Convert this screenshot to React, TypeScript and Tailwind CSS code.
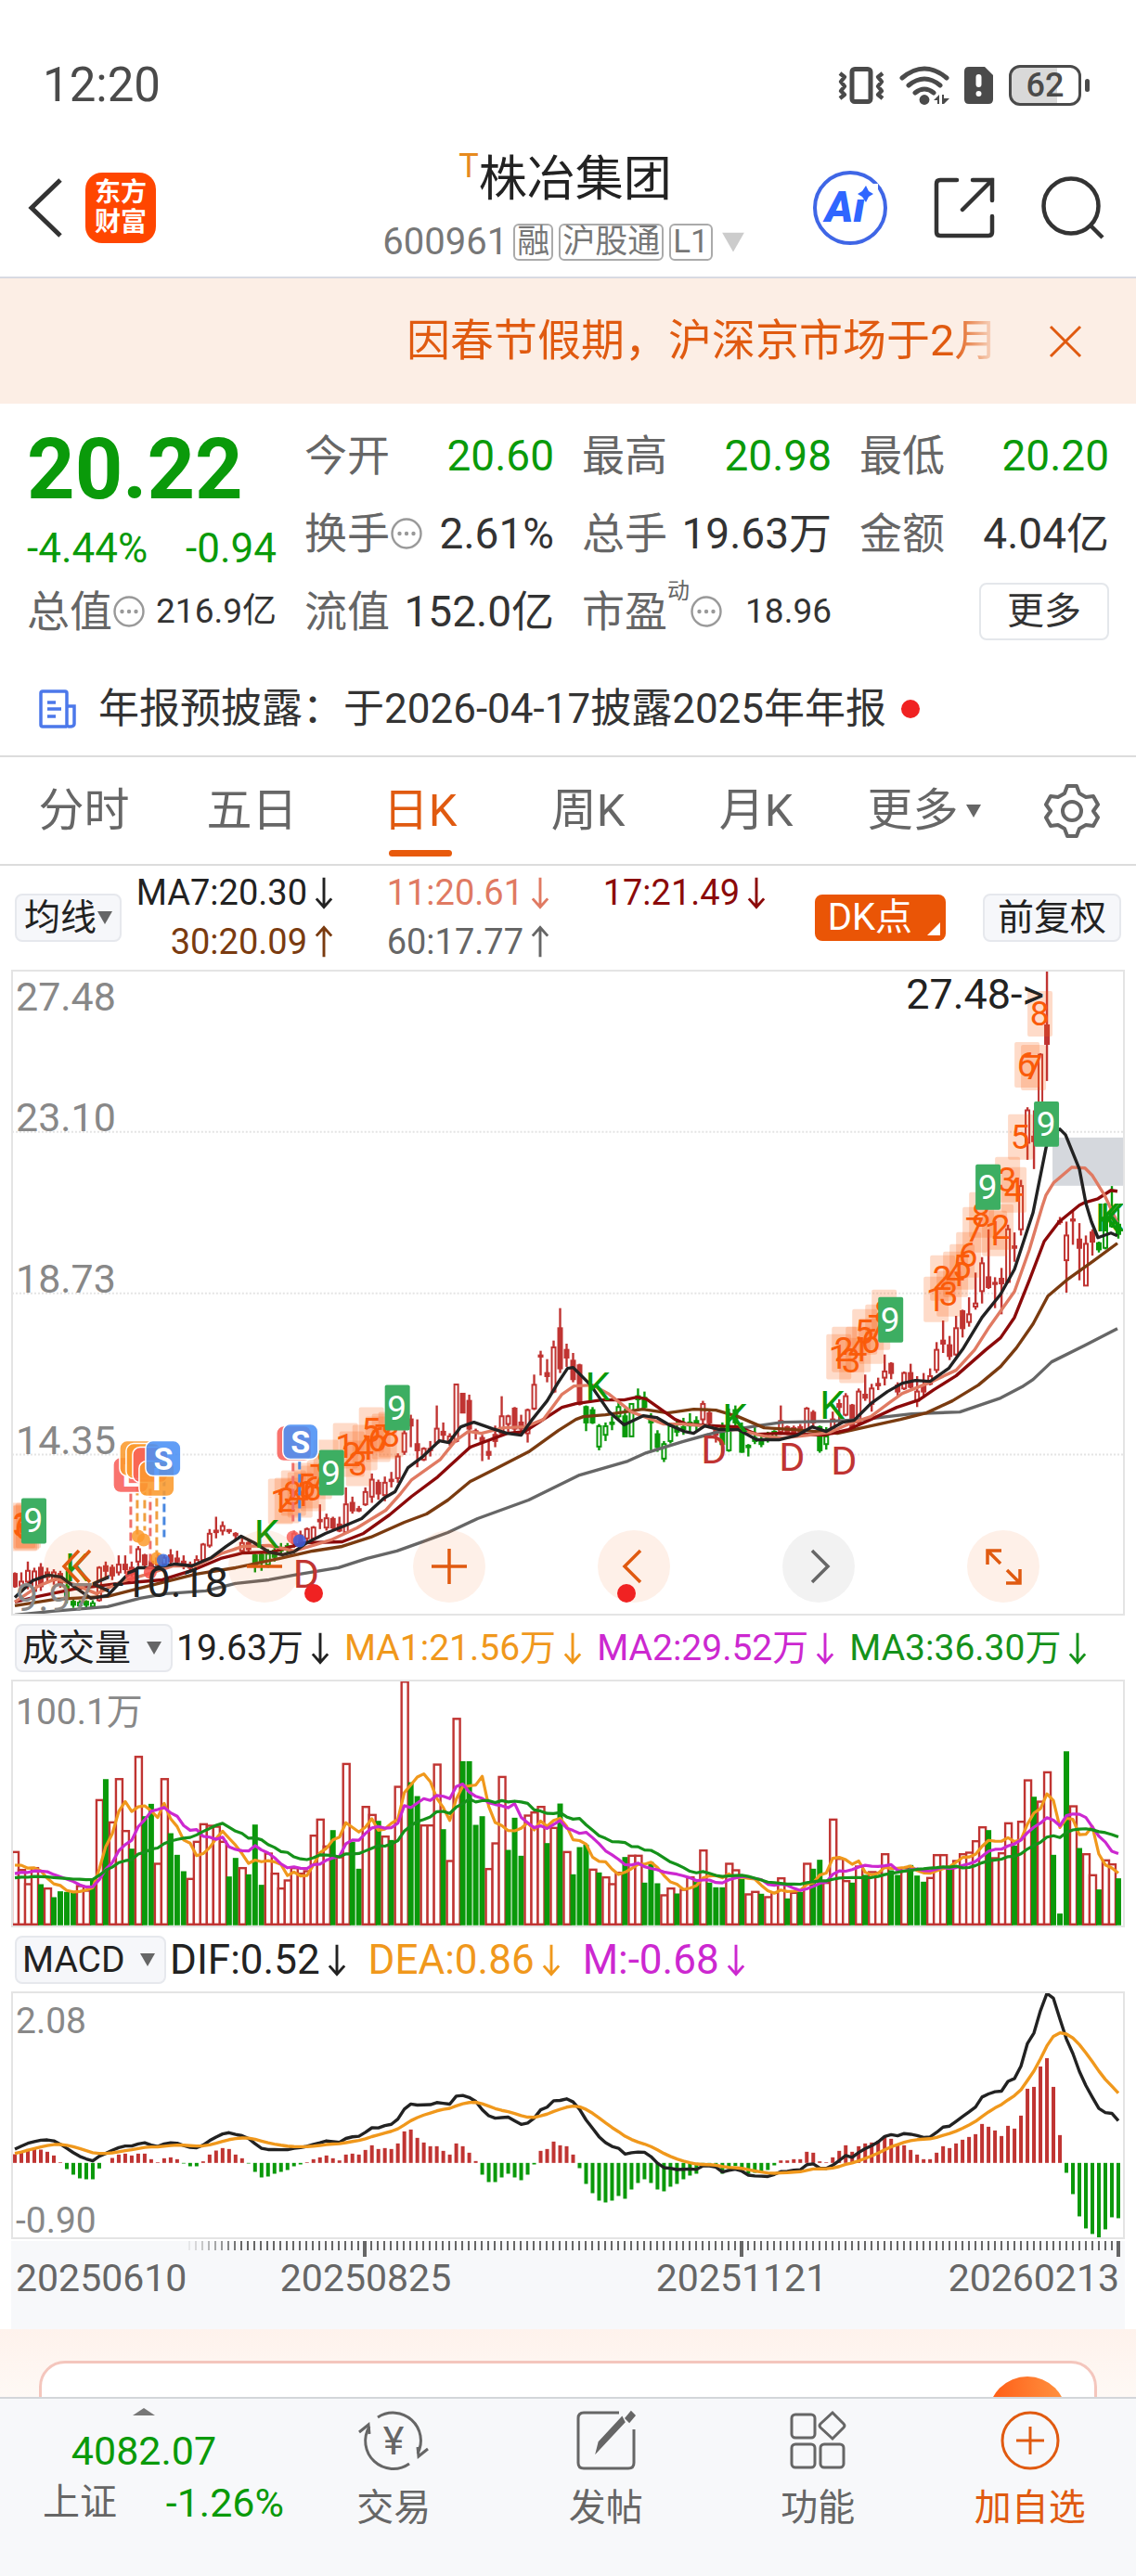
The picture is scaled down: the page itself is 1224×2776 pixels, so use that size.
import { FC, ReactNode } from "react";

type Candle = [kind: string, high: number, top: number, bottom: number, low: number];
type Point = [x: number, y: number];

const STEP = 7;
const FIRST_X = 15;
const barX = (i: number) => FIRST_X + i * STEP;

const RED = "#c03432";
const GREEN = "#0a990a";

// r / g are hollow bodies, R / G are filled ones. Levels are thirds of a unit below 1300.
const candles: Candle[] = [
  ["R", 1185, 1190, 1230, 1235], ["r", 1185, 1215, 1228, 1232], ["r", 1150, 1180, 1215, 1240], ["r", 1170, 1182, 1245, 1250],
  ["R", 1155, 1170, 1230, 1245], ["R", 1170, 1185, 1200, 1215], ["r", 1175, 1185, 1210, 1225], ["R", 1180, 1190, 1225, 1235],
  ["G", 1180, 1230, 1270, 1285], ["G", 1270, 1280, 1290, 1300], ["g", 1275, 1283, 1292, 1302], ["G", 1275, 1280, 1290, 1300],
  ["g", 1275, 1285, 1295, 1303], ["r", 1165, 1170, 1275, 1280], ["R", 1150, 1165, 1180, 1200], ["R", 1160, 1170, 1195, 1210],
  ["r", 1130, 1160, 1185, 1195], ["R", 1130, 1160, 1175, 1190], ["R", 1150, 1170, 1190, 1200], ["r", 1100, 1110, 1150, 1165],
  ["R", 1125, 1130, 1160, 1175], ["R", 1130, 1150, 1165, 1175], ["r", 1125, 1140, 1160, 1165], ["r", 1130, 1138, 1158, 1165],
  ["R", 1110, 1130, 1150, 1160], ["R", 1115, 1140, 1150, 1165], ["R", 1130, 1150, 1165, 1175], ["R", 1150, 1160, 1170, 1180],
  ["r", 1130, 1145, 1165, 1170], ["r", 1090, 1095, 1145, 1150], ["r", 1045, 1060, 1098, 1105], ["R", 1005, 1050, 1055, 1075],
  ["r", 1020, 1035, 1050, 1065], ["R", 1045, 1048, 1052, 1060], ["R", 1055, 1060, 1065, 1080], ["r", 1070, 1090, 1115, 1125],
  ["R", 1080, 1090, 1110, 1125], ["G", 1125, 1130, 1160, 1185], ["G", 1120, 1128, 1150, 1180], ["g", 1110, 1125, 1160, 1170],
  ["G", 1095, 1115, 1135, 1150], ["G", 1090, 1105, 1115, 1125], ["G", 1090, 1100, 1110, 1125], ["r", 1050, 1060, 1090, 1105],
  ["R", 1050, 1065, 1090, 1100], ["r", 1040, 1045, 1075, 1085], ["r", 1035, 1040, 1075, 1080], ["R", 965, 1015, 1020, 1045],
  ["r", 995, 1010, 1040, 1050], ["R", 1005, 1012, 1040, 1050], ["R", 1005, 1030, 1050, 1055], ["r", 910, 965, 1055, 1060],
  ["R", 940, 960, 985, 995], ["R", 970, 980, 985, 990], ["r", 910, 925, 965, 970], ["r", 865, 885, 940, 960],
  ["R", 885, 895, 930, 950], ["r", 875, 895, 935, 955], ["R", 860, 885, 890, 910], ["r", 800, 810, 880, 895],
  ["r", 725, 735, 795, 805], ["R", 675, 690, 710, 780], ["R", 690, 770, 790, 845], ["r", 780, 785, 820, 825],
  ["R", 760, 785, 790, 810], ["r", 645, 720, 765, 770], ["R", 700, 730, 740, 765], ["r", 735, 745, 765, 775],
  ["r", 575, 577, 760, 765], ["R", 605, 607, 668, 670], ["R", 610, 630, 720, 785], ["R", 720, 728, 732, 755],
  ["R", 740, 750, 760, 825], ["R", 760, 795, 805, 820], ["R", 710, 740, 760, 780], ["r", 615, 680, 735, 740],
  ["r", 675, 680, 705, 735], ["R", 650, 655, 720, 740], ["R", 675, 700, 720, 740], ["r", 655, 660, 735, 765],
  ["r", 545, 578, 655, 660], ["R", 468, 483, 487, 548], ["R", 495, 540, 550, 570], ["r", 435, 457, 600, 605],
  ["R", 330, 395, 525, 540], ["R", 445, 465, 490, 520], ["R", 475, 500, 560, 570], ["R", 510, 515, 640, 645],
  ["G", 645, 650, 700, 728], ["G", 650, 660, 700, 705], ["g", 705, 712, 778, 790], ["g", 700, 712, 740, 760],
  ["G", 680, 700, 705, 725], ["g", 630, 650, 680, 690], ["G", 655, 680, 745, 748], ["g", 640, 640, 745, 745],
  ["G", 590, 615, 625, 655], ["G", 600, 620, 650, 660], ["G", 670, 690, 700, 790], ["G", 725, 738, 780, 795],
  ["g", 760, 770, 817, 828], ["g", 700, 712, 760, 768], ["G", 690, 720, 730, 745], ["G", 685, 715, 722, 740],
  ["g", 670, 700, 710, 735], ["G", 680, 695, 710, 730], ["r", 630, 640, 690, 710], ["R", 655, 670, 700, 715],
  ["R", 710, 720, 740, 765], ["G", 700, 715, 770, 808], ["g", 655, 720, 790, 795], ["G", 645, 660, 700, 720],
  ["G", 700, 715, 795, 798], ["G", 770, 775, 780, 810], ["G", 715, 750, 760, 770], ["G", 740, 755, 770, 780],
  ["G", 730, 745, 755, 765], ["g", 725, 730, 748, 752], ["r", 645, 695, 730, 740], ["R", 710, 715, 735, 740],
  ["R", 710, 718, 735, 740], ["R", 705, 715, 735, 740], ["r", 650, 655, 725, 730], ["R", 660, 668, 700, 720],
  ["G", 710, 715, 790, 798], ["g", 715, 745, 770, 788], ["r", 665, 690, 730, 740], ["R", 625, 640, 650, 710],
  ["r", 605, 615, 675, 680], ["R", 640, 645, 715, 720], ["r", 590, 600, 700, 710], ["R", 545, 610, 620, 630],
  ["r", 575, 590, 640, 665], ["R", 555, 575, 580, 595], ["r", 480, 535, 555, 580], ["R", 505, 510, 540, 560],
  ["R", 570, 580, 600, 615], ["r", 535, 540, 590, 595], ["R", 510, 540, 585, 590], ["r", 550, 600, 630, 650],
  ["R", 540, 580, 600, 620], ["r", 525, 550, 575, 580], ["r", 440, 465, 530, 540], ["R", 370, 435, 445, 475],
  ["R", 420, 450, 485, 498], ["r", 355, 395, 480, 485], ["R", 335, 340, 395, 425], ["r", 295, 350, 375, 390],
  ["r", 215, 315, 325, 335], ["r", 165, 185, 275, 315], ["R", 75, 230, 262, 268], ["R", 230, 248, 252, 330],
  ["R", 200, 235, 250, 350], ["r", 60, 75, 245, 250], ["R", 85, 130, 135, 180], ["r", -85, -65, 75, 95],
  ["r", -320, -310, -205, -150], ["R", -310, -225, -210, -120], ["r", -495, -490, -330, -320], ["R", -763, -585, -525, -405],
  ["R", -330, -320, -230, -210], ["R", 35, 48, 52, 60], ["r", 50, 95, 175, 280], ["R", 15, 43, 47, 125],
  ["R", 55, 108, 135, 240], ["r", 95, 122, 257, 258], ["R", 75, 85, 115, 160], ["G", 115, 120, 140, 150],
  ["g", -10, 50, 135, 140], ["g", -65, 20, 65, 70], ["G", 10, 60, 90, 105],
];

const ma7: Point[] = [
  [15, 1722], [34, 1704], [51, 1698], [65, 1700], [81, 1712], [97, 1723], [115, 1720], [134, 1700], [148, 1690], [166, 1690],
  [188, 1686], [206, 1688], [227, 1679], [243, 1667], [259, 1656], [273, 1663], [289, 1673], [304, 1676], [316, 1673],
  [330, 1663], [350, 1653], [370, 1645], [389, 1637], [413, 1615], [425, 1608], [439, 1582], [455, 1570], [473, 1553],
  [483, 1555], [496, 1538], [510, 1533], [530, 1540], [546, 1545], [561, 1547], [573, 1530], [589, 1510], [601, 1490],
  [611, 1475], [617, 1474], [636, 1493], [656, 1522], [672, 1536], [693, 1526], [707, 1528], [719, 1535], [737, 1543],
  [747, 1545], [759, 1537], [775, 1541], [795, 1541], [815, 1552], [839, 1552], [859, 1547], [875, 1538], [890, 1543],
  [908, 1533], [920, 1531], [938, 1513], [956, 1500], [972, 1491], [986, 1488], [1002, 1489], [1022, 1475], [1038, 1453],
  [1058, 1420], [1078, 1395], [1093, 1368], [1113, 1307], [1127, 1237], [1132, 1222], [1142, 1217], [1148, 1223],
  [1163, 1260], [1170, 1297], [1176, 1317], [1183, 1334], [1197, 1329], [1204, 1332],
];
const ma11: Point[] = [
  [15, 1727], [40, 1710], [59, 1702], [79, 1708], [103, 1718], [130, 1705], [158, 1697], [186, 1688], [210, 1688],
  [237, 1675], [261, 1667], [289, 1666], [316, 1672], [340, 1665], [356, 1660], [384, 1647], [415, 1628], [431, 1610],
  [443, 1595], [474, 1573], [490, 1553], [504, 1543], [518, 1545], [542, 1539], [565, 1538], [585, 1530], [605, 1503],
  [618, 1494], [638, 1493], [656, 1503], [680, 1522], [715, 1535], [735, 1535], [759, 1537], [775, 1541], [795, 1541],
  [823, 1548], [843, 1550], [871, 1547], [894, 1544], [914, 1535], [938, 1527], [958, 1512], [972, 1502], [1002, 1490],
  [1030, 1477], [1050, 1455], [1066, 1430], [1093, 1392], [1109, 1347], [1123, 1300], [1127, 1288], [1135, 1275],
  [1155, 1258], [1169, 1259], [1177, 1267], [1190, 1288], [1204, 1318],
];
const ma17: Point[] = [
  [15, 1727], [40, 1721], [79, 1713], [127, 1707], [174, 1703], [206, 1693], [237, 1680], [261, 1674], [293, 1673],
  [328, 1663], [368, 1662], [391, 1653], [419, 1633], [443, 1613], [471, 1592], [506, 1560], [546, 1545], [565, 1543],
  [585, 1530], [605, 1517], [620, 1513], [648, 1509], [672, 1509], [686, 1506], [696, 1508], [727, 1530], [739, 1535],
  [771, 1537], [795, 1538], [815, 1546], [839, 1545], [887, 1547], [914, 1541], [938, 1530], [966, 1517], [990, 1509],
  [1006, 1498], [1030, 1483], [1062, 1455], [1078, 1442], [1093, 1420], [1109, 1380], [1125, 1338], [1141, 1317],
  [1163, 1299], [1169, 1296], [1183, 1292], [1197, 1283], [1204, 1284],
];
const ma30: Point[] = [
  [15, 1731], [59, 1724], [115, 1721], [158, 1710], [210, 1697], [253, 1690], [301, 1680], [336, 1672], [368, 1667],
  [399, 1657], [435, 1641], [459, 1632], [482, 1617], [506, 1597], [534, 1583], [569, 1565], [601, 1542], [620, 1530],
  [628, 1527], [652, 1525], [692, 1519], [719, 1523], [747, 1519], [771, 1520], [795, 1527], [823, 1539], [855, 1541],
  [902, 1545], [938, 1537], [970, 1530], [998, 1523], [1026, 1510], [1054, 1493], [1078, 1473], [1095, 1453],
  [1113, 1427], [1129, 1397], [1149, 1380], [1177, 1360], [1204, 1340],
];
const ma60: Point[] = [
  [15, 1741], [55, 1737], [115, 1732], [150, 1723], [178, 1718], [221, 1715], [253, 1707], [289, 1703], [316, 1698],
  [364, 1690], [395, 1680], [427, 1672], [455, 1662], [482, 1652], [514, 1637], [569, 1617], [624, 1590], [676, 1575],
  [696, 1566], [735, 1554], [771, 1544], [815, 1537], [843, 1533], [894, 1532], [930, 1530], [982, 1524], [1034, 1522],
  [1078, 1507], [1101, 1495], [1113, 1487], [1133, 1468], [1169, 1450], [1204, 1432],
];

const counts: [string, number, number][] = [
  ["3", 10, 1620], ["6", 12, 1623], ["7", 14, 1622], ["8", 16, 1620],
  ["1", 288, 1594], ["2", 295, 1593], ["3", 302, 1585], ["4", 309, 1587], ["5", 316, 1577], ["6", 323, 1580], ["7", 330, 1567], ["8", 337, 1552],
  ["1", 358, 1534], ["2", 365, 1543], ["3", 372, 1553], ["4", 379, 1536], ["5", 386, 1517], ["6", 393, 1527], ["7", 400, 1524], ["8", 407, 1522],
  ["1", 890, 1438], ["2", 896, 1430], ["3", 904, 1442], ["4", 911, 1430], ["5", 918, 1411], ["6", 925, 1421], ["7", 932, 1406], ["8", 939, 1390],
  ["1", 995, 1376], ["2", 1002, 1353], ["3", 1009, 1370], ["4", 1016, 1349], ["5", 1023, 1341], ["6", 1030, 1328], ["7", 1037, 1301], ["8", 1044, 1285],
  ["1", 1058, 1305], ["2", 1065, 1298], ["3", 1072, 1247], ["4", 1079, 1258], ["5", 1086, 1201], ["6", 1093, 1123], ["7", 1100, 1126], ["8", 1107, 1068],
];
const nines: Point[] = [[22, 1615], [343, 1563], [414, 1493], [946, 1398], [1051, 1255], [1114, 1187]];
const kMarks: Point[] = [[69, 1705], [273, 1669], [630, 1509], [778, 1543], [883, 1529], [1180, 1327], [1185, 1327]];
const dMarks: Point[] = [[315, 1712], [755, 1577], [839, 1585], [895, 1589]];

const badges: [string, number, number, string][] = [
  ["L", 121, 1571, "#f8605a"], ["", 128, 1553, "#fb9a2c"], ["", 135, 1556, "#fb9a2c"], ["", 142, 1560, "#f8605a"],
  ["I", 149, 1575, "#fb9a2c"], ["S", 156, 1553, "#4a90f5"], ["", 297, 1537, "#f8605a"], ["S", 304, 1535, "#4a90f5"],
];
const drops: [number, number, number, string][] = [
  [140, 1610, 1675, "#f0706a"], [147, 1603, 1655, "#f0a040"], [155, 1603, 1650, "#f0a040"], [161, 1605, 1690, "#f0706a"],
  [168, 1615, 1675, "#f0a040"], [176, 1593, 1657, "#4a88e0"], [315, 1577, 1640, "#f0706a"], [322, 1575, 1640, "#4a88e0"],
];
const dots: [number, number, string][] = [
  [148, 1656, "#fb9a2c"], [154, 1660, "#fb9a2c"], [168, 1680, "#fb9a2c"], [175, 1682, "#3b6fe0"], [141, 1698, "#f8504a"],
  [161, 1695, "#f8504a"], [315, 1657, "#f8605a"], [322, 1661, "#3b5fe0"],
];

// Tops of the volume bars in thirds of a unit, negative on falling days.
const volume = [
  768, 826, 872, 820, -875, 886, -917, -898, -900, -900, 878, 893, -860, 600, -535, 672, 532, 700, -760, 460,
  -655, -615, 806, 532, -710, -780, -833, 855, 735, 678, 683, 686, 735, -850, -790, 820, -843, -682, -877, 773,
  838, 886, 860, 820, 838, 830, 715, 663, 750, -700, 785, 483, -738, -825, 622, 648, -670, 718, -732, 557,
  217, -545, -590, 682, 682, 485, -697, 797, 337, -477, -477, -683, -655, 823, 740, 525, -764, -660, -783, 650,
  640, 622, -742, 690, -614, 768, -843, -755, -747, 825, -837, 850, 872, 835, -787, 780, 780, -870, -803, -872,
  908, 886, -905, 890, 850, -868, 763, -870, -885, -885, 806, 827, -858, 905, 897, -906, 914, 900, 853, -921,
  900, -900, 806, -825, -796, 868, 663, 790, 862, -870, 815, -845, 833, 835, 775, -830, -845, 820, -813, -847,
  -867, 852, 778, 778, -815, 797, 775, 770, 733, 688, -700, 788, 772, 675, -750, 670, 536, -592, 605, 510,
  -780, -970, -445, 620, -758, 775, 843, -892, 795, 808, -856,
];
const macd = [
  28, 38, 45, 45, 43, 36, 24, 2, -20, -38, -50, -53, -53, -18, 0, 16, 27, 30, 24, 30, 30, 12, 2, 15, 18, 12, -2, -11, -11, 5,
  27, 40, 48, 45, 27, 15, -2, -29, -47, -44, -35, -29, -23, -11, -5, 2, 12, 18, 24, 15, 8, 27, 30, 27, 42, 57, 45, 48, 45, 63,
  102, 108, 81, 66, 54, 54, 39, 27, 63, 54, 33, 6, -38, -62, -62, -47, -35, -47, -56, -38, -5, 39, 45, 69, 57, 54, 27, -17, -68, -98,
  -122, -128, -122, -107, -116, -86, -65, -53, -65, -86, -92, -77, -68, -53, -41, -35, -10, -8, -12, -35, -20, -10, -18, -35, -32, -27, -23, -8, 8, 8,
  12, 12, 36, 33, 5, 2, 18, 39, 57, 36, 54, 63, 66, 72, 86, 78, 57, 57, 42, 27, 12, 12, 33, 54, 48, 63, 75, 84, 93, 126,
  117, 105, 87, 120, 111, 153, 240, 246, 312, 339, 246, 90, -32, -101, -173, -212, -230, -242, -215, -176, -179,
];

const toLine = (points: Point[]) => points.map((p) => p.join(",")).join(" ");

function average(n: number) {
  const tops = [...Array(16).fill(868), 825, 825, 825, 825, ...volume.map(Math.abs)];
  return toLine(
    volume.map((_, i) => {
      const part = tops.slice(i + 21 - n, i + 21);
      return [barX(i), part.reduce((a, b) => a + b, 0) / n / 3 - 72] as Point;
    })
  );
}

let sum = 27;
const dea = macd.map((m) => (sum += m / 8));
const dif = dea.map((d, i) => d + macd[i] / 2);
const macdLine = (values: number[]) => toLine(values.map((v, i) => [barX(i), 184 - v / 3] as Point));

const Caret: FC<{ className?: string }> = ({ className = "" }) => (
  <svg viewBox="0 0 16 14" className={"h-3.5 w-4 shrink-0 " + className} fill="currentColor"><path d="M0 0h16L8 14z" /></svg>
);

const Arrow: FC<{ up?: boolean }> = ({ up }) => (
  <svg viewBox="0 0 22 38" className={"ml-2 inline-block h-9 w-5 shrink-0 align-[-5px] " + (up ? "rotate-180" : "")} fill="none" stroke="currentColor" strokeWidth="3.2">
    <path d="M11 1v35M2 26l9 10 9-10" />
  </svg>
);

const More: FC = () => (
  <svg viewBox="0 0 36 36" className="h-9 w-9 shrink-0" fill="none" stroke="#999" strokeWidth="2.4">
    <circle cx="18" cy="18" r="15.5" />
    <g fill="#999" stroke="none"><circle cx="10.5" cy="18" r="2.2" /><circle cx="18" cy="18" r="2.2" /><circle cx="25.5" cy="18" r="2.2" /></g>
  </svg>
);

const Field: FC<{ label: ReactNode; value: string; green?: boolean; small?: boolean }> = ({ label, value, green, small }) => (
  <div className="flex h-[84px] items-center justify-between whitespace-nowrap">
    <span className="flex items-center text-[46px] text-[#666]">{label}</span>
    <span className={(small ? "text-[37px] " : "text-[46px] ") + (green ? "text-[#0a9a0a]" : "text-[#333]")}>{value}</span>
  </div>
);

const Picker: FC<{ name: string; value: string; tight?: boolean }> = ({ name, value, tight }) => (
  <div className={"flex h-[52px] shrink-0 items-center rounded-lg border-2 border-[#e6e8ed] bg-[#f6f7fa] " + (tight ? "px-2" : "pl-1.5 pr-2.5")}>
    <select aria-label={name} className="appearance-none bg-transparent text-[39px] leading-[48px] text-[#222]">
      <option>{value}</option>
    </select>
    <Caret className={tight ? "text-[#666]" : "ml-4 text-[#666]"} />
  </div>
);

const RoundButton: FC<{ label: string; grey?: boolean; dot?: string; children: ReactNode }> = ({ label, grey, dot, children }) => (
  <button aria-label={label} className={"relative h-[78px] w-[78px] rounded-full " + (grey ? "bg-black/5" : "bg-[#f26a1b]/10")}>
    <svg viewBox="0 0 78 78" className="h-full w-full" fill="none" stroke={grey ? "#666" : "#e05a10"} strokeWidth="3.5">{children}</svg>
    {dot && <span className={"absolute bottom-0 h-5 w-5 rounded-full bg-[#f02222] " + dot} />}
  </button>
);

const NavItem: FC<{ label: string; active?: boolean; children: ReactNode }> = ({ label, active, children }) => (
  <a href="#" className={"flex flex-1 flex-col items-center pt-3 " + (active ? "text-[#e05a10]" : "text-[#666]")}>
    <svg viewBox="0 0 80 66" className="h-[66px] w-20" fill="none" stroke="currentColor" strokeWidth="3">{children}</svg>
    <span className="mt-3 text-[40px] leading-[56px]">{label}</span>
  </a>
);

function StatusBar() {
  return (
    <div className="flex h-[150px] items-end justify-between pb-[26px] pl-[46px] pr-[59px] text-[#4a4a4a]">
      <span className="text-[51px] leading-[64px]">12:20</span>
      <div className="flex h-16 items-center gap-4">
        <svg viewBox="0 0 50 42" className="h-[42px] w-[50px]" fill="none" stroke="currentColor" strokeWidth="5">
          <rect x="15" y="3.5" width="20" height="35" rx="3" />
          <path d="M2 8l5 4-4 5 4 5-4 5 4 4-5 4M48 8l-5 4 4 5-4 5 4 5-4 4 5 4" strokeWidth="4.4" strokeLinejoin="round" />
        </svg>
        <svg viewBox="0 0 54 42" className="h-[42px] w-[54px]" fill="none" stroke="currentColor" strokeWidth="5" strokeLinecap="round">
          <path d="M3 13Q27-7 51 13M10 21Q27 7 44 21M17 29Q27 21 37 29" />
          <circle cx="27" cy="36.5" r="5.4" fill="currentColor" stroke="none" />
          <path d="M37 37l6-6v10h-2v-4zM46 31h2v4h6l-6 6h-2z" fill="currentColor" stroke="none" />
        </svg>
        <svg viewBox="0 0 32 40" className="h-10 w-8"><path d="M5 0h17l9 9v26q0 5-5 5H5q-5 0-5-5V5q0-5 5-5z" fill="currentColor" /><path d="M15.500 11v8M15.500 29v.1" stroke="#fff" strokeWidth="6" strokeLinecap="round" /></svg>
        <div className="relative flex h-11 w-[78px] items-center justify-center rounded-xl border-[3px] border-current bg-linear-to-r from-[#d9d9d9] from-68% to-white to-68% text-[36px] font-medium leading-none">
          62
          <span className="absolute -right-3 h-3.5 w-[5px] rounded-full bg-current" />
        </div>
      </div>
    </div>
  );
}

function Header() {
  return (
    <header className="grid h-[150px] grid-cols-[1fr_auto_1fr] items-center border-b-2 border-[#d8dae2] pl-7 pr-[34px]">
      <div className="flex items-center gap-6">
        <button aria-label="返回">
          <svg viewBox="0 0 40 64" className="h-16 w-10" fill="none" stroke="#333" strokeWidth="5"><path d="M37 2 6 32l31 30" /></svg>
        </button>
        <div className="flex h-[76px] w-[76px] flex-col items-center justify-center rounded-[18px] bg-[#ff4600] text-[28px] font-bold leading-8 text-white">
          <span>东方</span>
          <span>财富</span>
        </div>
      </div>
      <div className="flex flex-col items-center pt-2">
        <h1 className="flex items-start text-[52px] leading-[66px] text-[#222]">
          <span className="text-[36px] leading-9 text-[#e68a1e]">T</span>株冶集团
        </h1>
        <div className="flex items-center gap-1.5 text-[40px] leading-[68px] text-[#777]">
          <span>600961</span>
          <span className="rounded-md border-2 border-[#aaa] px-0.5 text-[35px] leading-9">融</span>
          <span className="rounded-md border-2 border-[#aaa] px-0.5 text-[35px] leading-9">沪股通</span>
          <span className="rounded-md border-2 border-[#aaa] px-0.5 text-[35px] leading-9">L1</span>
          <Caret className="mx-2 scale-150 text-[#ccc]" />
        </div>
      </div>
      <div className="flex items-center justify-end gap-[50px]">
        <button aria-label="Ai">
          <svg viewBox="0 0 80 80" className="h-20 w-20">
            <circle cx="40" cy="40" r="38" fill="none" stroke="#3f66e6" strokeWidth="4" />
            <text x="13" y="55" fontSize="46" fontWeight="900" fontStyle="italic" fill="#2f66ff">Ai</text>
            <path d="M44 14h26v16H44z" fill="#fff" />
            <path d="m57 16 3 6 5 3-5 3-3 6-4-6-5-3 5-3z" fill="#2f66ff" />
          </svg>
        </button>
        <button aria-label="分享">
          <svg viewBox="0 0 66 66" className="h-[66px] w-[66px]" fill="none" stroke="#333" strokeWidth="4.5" strokeLinecap="round">
            <path d="M25 3H7q-4 0-4 4v52q0 4 4 4h52q4 0 4-4V42M42 3h21v22M63 3 31 35" />
          </svg>
        </button>
        <button aria-label="搜索">
          <svg viewBox="0 0 68 68" className="h-[68px] w-[68px]" fill="none" stroke="#333" strokeWidth="4.5">
            <circle cx="32" cy="32" r="29.5" /><path d="m53 53 13 13" />
          </svg>
        </button>
      </div>
    </header>
  );
}

function Notice() {
  return (
    <div className="flex h-[135px] items-center justify-between bg-[#fceee5] pl-[438px] pr-[58px] text-[#e05a10]">
      <p className="w-[640px] overflow-hidden whitespace-nowrap bg-linear-to-r from-[#e05a10] from-92% to-transparent bg-clip-text text-[47px] text-transparent">因春节假期，沪深京市场于2月</p>
      <button aria-label="关闭">
        <svg viewBox="0 0 36 36" className="h-9 w-9" fill="none" stroke="currentColor" strokeWidth="3"><path d="m2 2 32 32M34 2 2 34" /></svg>
      </button>
    </div>
  );
}

function Quote() {
  return (
    <section className="border-b-2 border-[#dcdcdc]">
      <div className="grid grid-cols-4 gap-x-[30px] px-[29px] pt-3.5">
        <div className="text-[#0a9a0a]">
          <div className="h-[116px] text-[90px] font-bold leading-[116px]">20.22</div>
          <div className="flex h-[52px] items-center justify-between whitespace-nowrap text-[44px] leading-[52px]"><span>-4.44%</span><span>-0.94</span></div>
          <div className="text-[#333]"><Field small label={<>总值<More /></>} value="216.9亿" /></div>
        </div>
        <div>
          <Field label="今开" value="20.60" green />
          <Field label={<>换手<More /></>} value="2.61%" />
          <Field label="流值" value="152.0亿" />
        </div>
        <div>
          <Field label="最高" value="20.98" green />
          <Field label="总手" value="19.63万" />
          <Field small label={<>市盈<span className="self-start text-[24px] leading-6">动</span><More /></>} value="18.96" />
        </div>
        <div>
          <Field label="最低" value="20.20" green />
          <Field label="金额" value="4.04亿" />
          <div className="flex h-[84px] items-center justify-end">
            <button className="h-[62px] rounded-lg border-2 border-[#e4e7eb] px-7 text-[40px] leading-none text-[#333]">更多</button>
          </div>
        </div>
      </div>
      <a href="#" className="flex h-[113px] items-center gap-6 pl-[42px] pt-3 text-[44px] text-[#333]">
        <svg viewBox="0 0 40 42" className="h-[42px] w-10" fill="none" stroke="#4c78ea" strokeWidth="3.5">
          <path d="M30 40H4q-2 0-2-2V4q0-2 2-2h24q2 0 2 2v34q0 2 3 2 5 0 5-3V18h-8" /><path d="M9 14h9M9 21h15M9 29h9" />
        </svg>
        <span className="flex items-center gap-4">年报预披露：于2026-04-17披露2025年年报<span className="h-5 w-5 rounded-full bg-[#f02222]" /></span>
      </a>
    </section>
  );
}

function Tabs() {
  const tabs = ["分时", "五日", "日K", "周K", "月K"];
  return (
    <nav className="flex h-[117px] items-stretch border-b-2 border-[#dcdcdc] text-[49px] text-[#666]">
      {tabs.map((tab) => (
        <button key={tab} className={"relative flex-[181] " + (tab === "日K" ? "text-[#e05a10]" : "")}>
          {tab}
          {tab === "日K" && <span className="absolute bottom-2 left-1/2 h-[7px] w-[68px] -translate-x-1/2 rounded-full bg-[#e85a0c]" />}
        </button>
      ))}
      <button className="flex flex-[181] items-center justify-center gap-2">更多<Caret /></button>
      <button aria-label="设置" className="flex flex-[138] items-center justify-center">
        <svg viewBox="0 0 60 60" className="h-[60px] w-[60px]" fill="none" stroke="currentColor" strokeWidth="4" strokeLinejoin="round">
          <path d="M25 3h10l3 8 7 4 8-1 5 9-5 7 5 7-5 9-8-1-7 4-3 8H25l-3-8-7-4-8 1-5-9 5-7-5-7 5-9 8 1 7-4z" />
          <circle cx="30" cy="30" r="10" />
        </svg>
      </button>
    </nav>
  );
}

function AverageRow() {
  return (
    <div className="flex h-[112px] items-center px-4">
      <Picker name="指标" value="均线" tight />
      <div className="ml-3 grid grid-cols-[216px_233px_233px] whitespace-nowrap text-right text-[38px] leading-[53px]">
        <span className="text-[#222]">MA7:20.30<Arrow /></span>
        <span className="text-[#e07a62]">11:20.61<Arrow /></span>
        <span className="text-[#8b0a0a]">17:21.49<Arrow /></span>
        <span className="text-[#7a3b10]">30:20.09<Arrow up /></span>
        <span className="text-[#666]">60:17.77<Arrow up /></span>
      </div>
      <button className="relative ml-auto h-[50px] rounded-lg bg-[#ea5506] pl-3.5 pr-9 text-[40px] leading-none text-white">
        DK点
        <svg viewBox="0 0 14 14" className="absolute bottom-1.5 right-1.5 h-3.5 w-3.5"><path d="M14 0v14H0z" fill="#fff" /></svg>
      </button>
      <button className="ml-10 h-[52px] rounded-lg border-2 border-[#e6e8ed] bg-[#f6f7fa] px-3.5 text-[39px] leading-none text-[#222]">前复权</button>
    </div>
  );
}

function PriceChart() {
  const level = (v: number) => 1300 + v / 3;
  return (
    <div className="relative mx-3 border-2 border-[#e4e4e4]">
      <svg viewBox="13 1047 1197 693" className="block h-auto w-full">
        <g stroke="#e4e4e4" strokeWidth="2" strokeDasharray="2 2"><path d="M12 1220h1200M12 1394h1200M12 1568h1200" /></g>
        <rect x="1134" y="1226" width="78" height="52" fill="#d5d8dd" />
        {candles.map(([kind, high, top, bottom, low], i) => {
          const color = kind.toLowerCase() === "r" ? RED : GREEN;
          const hollow = kind === "r" || kind === "g";
          return (
            <g key={i} stroke={color} strokeWidth="2.4">
              <path d={`M${barX(i)} ${level(high)}V${level(low)}`} />
              <rect x={barX(i) - 2} y={level(top)} width="4" height={Math.max(1, level(bottom) - level(top))} fill={hollow ? "#fff" : color} strokeWidth="2" />
            </g>
          );
        })}
        <g fontSize="37" textAnchor="middle" fill="#fa5a08">
          {counts.map(([n, x, y], i) => (
            <g key={i}>
              <rect x={x} y={y} width="27" height="49" rx="2" fill="#fa6414" fillOpacity=".23" />
              <text x={x + 13} y={y + 37}>{n}</text>
            </g>
          ))}
        </g>
        <g fill="none" strokeWidth="3.4" strokeLinejoin="round">
          <polyline points={toLine(ma60)} stroke="#666" />
          <polyline points={toLine(ma30)} stroke="#7a3b10" />
          <polyline points={toLine(ma17)} stroke="#8b0a0a" />
          <polyline points={toLine(ma11)} stroke="#e07a62" />
          <polyline points={toLine(ma7)} stroke="#222" />
        </g>
        {nines.map(([x, y]) => (
          <g key={x}>
            <rect x={x} y={y} width="27" height="49" rx="2" fill="#3dae62" />
            <text x={x + 13} y={y + 37} fontSize="37" textAnchor="middle" fill="#fff">9</text>
          </g>
        ))}
        {drops.map(([x, y1, y2, color]) => <path key={x} d={`M${x} ${y1}V${y2}`} stroke={color} strokeWidth="3" strokeDasharray="9 5" />)}
        {dots.map(([x, y, color]) => <circle key={x} cx={x} cy={y} r="7" fill={color} fillOpacity=".85" />)}
        {badges.map(([letter, x, y, color]) => (
          <g key={x}>
            <rect x={x} y={y} width="38" height="38" rx="8" fill={color} fillOpacity=".88" stroke="#fff" strokeWidth="1.5" />
            <text x={x + 19} y={y + 31} fontSize="34" fontWeight="700" textAnchor="middle" fill="#fff">{letter}</text>
          </g>
        ))}
        <g fontSize="43" fill={GREEN}>{kMarks.map(([x, y]) => <text key={x} x={x} y={y}>K</text>)}</g>
        <g fontSize="43" fill={RED}>{dMarks.map(([x, y]) => <text key={x} x={x} y={y}>D</text>)}</g>
        <g fontSize="43" fill="#888">
          <text x="16" y="1089">27.48</text>
          <text x="16" y="1219">23.10</text>
          <text x="16" y="1393">18.73</text>
          <text x="16" y="1567">14.35</text>
          <text x="16" y="1737">9.97</text>
        </g>
        <g fontSize="45" fill="#222">
          <text x="1125" y="1087" textAnchor="end">27.48-&gt;</text>
          <text x="97" y="1722">&lt;-10.18</text>
        </g>
      </svg>
      <div className="absolute inset-x-0 bottom-3 flex justify-between pl-[33px] pr-[90px]">
        <RoundButton label="最早"><path d="M38 22 22 39l16 17M50 22 34 39l16 17" /></RoundButton>
        <RoundButton label="缩小" dot="right-[-24px]"><path d="M20 39h38" /></RoundButton>
        <RoundButton label="放大"><path d="M20 39h38M39 20v38" /></RoundButton>
        <RoundButton label="向左" dot="left-[21px]"><path d="M46 22 29 39l17 17" /></RoundButton>
        <RoundButton label="向右" grey><path d="m32 22 17 17-17 17" /></RoundButton>
        <RoundButton label="全屏"><path d="M37 22H22v15M22 22l14 14M57 42v15H42M57 57 43 43" /></RoundButton>
      </div>
    </div>
  );
}

function VolumeChart() {
  return (
    <>
      <div className="flex h-[69px] items-center gap-4 whitespace-nowrap pl-4 text-[39px]">
        <div className="flex items-center gap-1">
          <Picker name="副图一" value="成交量" />
          <span className="flex items-center text-[#222]">19.63万<Arrow /></span>
        </div>
        <span className="flex items-center text-[#f0981c]">MA1:21.56万<Arrow /></span>
        <span className="flex items-center text-[#cc28d0]">MA2:29.52万<Arrow /></span>
        <span className="flex items-center text-[#15921a]">MA3:36.30万<Arrow /></span>
      </div>
      <div className="mx-3 border-2 border-[#e4e4e4]">
        <svg viewBox="13 1 1197 263" className="block h-auto w-full">
          {volume.map((v, i) => {
            const top = Math.abs(v) / 3 - 72;
            return v < 0
              ? <rect key={i} x={barX(i) - 3} y={top} width="6" height={264 - top} fill={GREEN} />
              : <rect key={i} x={barX(i) - 3} y={top + 1} width="7" height={262 - top} fill="#fff" stroke={RED} strokeWidth="2.4" />;
          })}
          <g fill="none" strokeWidth="3.2" strokeLinejoin="round">
            <polyline points={average(5)} stroke="#f0981c" />
            <polyline points={average(10)} stroke="#cc28d0" />
            <polyline points={average(20)} stroke="#15921a" />
          </g>
          <text x="16" y="47" fontSize="39" fill="#888">100.1万</text>
        </svg>
      </div>
    </>
  );
}

function MacdChart() {
  return (
    <>
      <div className="flex h-[69px] items-center gap-6 whitespace-nowrap pl-4 text-[44px]">
        <div className="flex items-center gap-1">
          <Picker name="副图二" value="MACD" />
          <span className="flex items-center text-[#222]">DIF:0.52<Arrow /></span>
        </div>
        <span className="flex items-center text-[#f0981c]">DEA:0.86<Arrow /></span>
        <span className="flex items-center text-[#cc28d0]">M:-0.68<Arrow /></span>
      </div>
      <div className="mx-3 border-2 border-[#e4e4e4]">
        <svg viewBox="13 1 1197 263" className="block h-auto w-full">
          {macd.map((m, i) => (
            <rect key={i} x={barX(i) - 2} y={m > 0 ? 184 - m / 3 : 184} width="4" height={Math.abs(m) / 3} fill={m > 0 ? RED : GREEN} />
          ))}
          <g fill="none" strokeWidth="3.4" strokeLinejoin="round">
            <polyline points={macdLine(dif)} stroke="#222" />
            <polyline points={macdLine(dea)} stroke="#f0981c" />
          </g>
          <text x="16" y="44" fontSize="39" fill="#888">2.08</text>
          <text x="16" y="259" fontSize="39" fill="#888">-0.90</text>
        </svg>
      </div>
    </>
  );
}

function DateAxis() {
  const big = [54, 112, 170];
  return (
    <div className="mx-3 mt-0.5 bg-[#f7f8fa]">
      <svg viewBox="12 0 1200 95" className="block h-auto w-full">
        {macd.map((_, i) => i > 26 && (
          <rect key={i} x={barX(i) - (big.includes(i) ? 2 : 1)} y="0" width={big.includes(i) ? 4 : 2} height={big.includes(i) ? 17 : 10} fill="#666" opacity={Math.min(1, (i - 26) / 9)} />
        ))}
        <g fontSize="41" fill="#666">
          <text x="17" y="54">20250610</text>
          <text x="394" y="54" textAnchor="middle">20250825</text>
          <text x="799" y="54" textAnchor="middle">20251121</text>
          <text x="1206" y="54" textAnchor="end">20260213</text>
        </g>
      </svg>
    </div>
  );
}

export default function App() {
  return (
    <div className="min-h-screen overflow-hidden bg-white font-['Roboto','Noto_Sans_CJK_SC',sans-serif]">
      <StatusBar />
      <Header />
      <Notice />
      <Quote />
      <Tabs />
      <AverageRow />
      <PriceChart />
      <VolumeChart />
      <MacdChart />
      <DateAxis />
      <div className="h-[73px] overflow-hidden bg-linear-to-b from-[#fef2ec] to-[#fef9f5] px-[42px] pt-[34px]">
        <div className="h-40 rounded-[28px] border-[3px] border-[#f4c6bd] bg-white pr-[30px] pt-3.5">
          <div className="ml-auto h-[84px] w-[84px] rounded-full bg-linear-to-r from-[#ff5a10] to-[#ff9340]" />
        </div>
      </div>
      <nav className="flex h-[193px] border-t-2 border-[#d3d6da] bg-[#f7f8fa]">
        <a href="#" className="flex w-[310px] flex-col items-center pt-2.5 text-[#0a9a0a]">
          <svg viewBox="0 0 24 8" className="h-2 w-6" fill="#777"><path d="M12 0l12 8H0z" /></svg>
          <span className="mt-2.5 text-[43px] leading-[56px]">4082.07</span>
          <span className="flex w-full items-center justify-between pl-[46px] pr-1 text-[43px] leading-[56px]"><span className="text-[40px] text-[#666]">上证</span><span>-1.26%</span></span>
        </a>
        <NavItem label="交易">
          <path d="M23 8A30 30 0 0 1 66 47M57 58A30 30 0 0 1 14 18" /><path d="m3 24 10-8 1 10M77 42l-10 8-1-10" />
          <text x="40" y="48" fontSize="43" textAnchor="middle" fill="currentColor" stroke="none">¥</text>
        </NavItem>
        <NavItem label="发帖">
          <path d="M54 3H16q-6 0-6 6v48q0 6 6 6h48q6 0 6-6V21" /><path d="M59 13 31 43l2-8 24-26zM62 9l5-6 3 3-5 6z" fill="currentColor" />
        </NavItem>
        <NavItem label="功能">
          <rect x="12" y="5" width="25" height="25" rx="4" /><rect x="12" y="37" width="25" height="25" rx="4" /><rect x="43" y="37" width="25" height="25" rx="4" />
          <path d="m56 3 12 12q2 2 0 4L56 31 43 19q-2-2 0-4z" />
        </NavItem>
        <NavItem label="加自选" active>
          <circle cx="40" cy="33" r="30" /><path d="M25 33h30M40 18v30" />
        </NavItem>
      </nav>
    </div>
  );
}
